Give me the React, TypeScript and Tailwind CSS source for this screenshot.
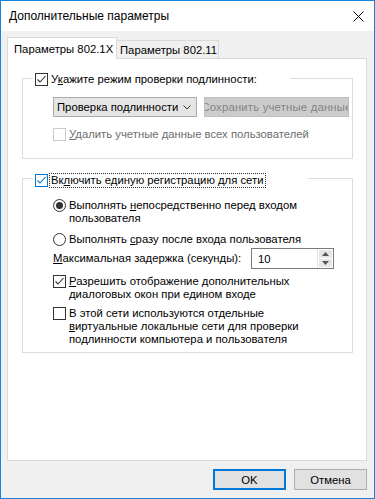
import React from "react";

const FONT = { fontFamily: '"Liberation Sans", Arial, sans-serif' };

function CheckBox({ checked, variant = "normal" }: { checked?: boolean; variant?: "normal" | "focus" | "disabled" }) {
  const border =
    variant === "focus" ? "border-[#0078d7]" : variant === "disabled" ? "border-[#cccccc]" : "border-[#333333]";
  const stroke = variant === "focus" ? "#0078d7" : "#333333";
  return (
    <div className={`w-[13px] h-[13px] border ${border} bg-white flex items-center justify-center shrink-0`}>
      {checked && (
        <svg width="11" height="11" viewBox="0 0 11 11">
          <path d="M1.5 5.5 L4 8 L9.5 2" fill="none" stroke={stroke} strokeWidth="1.1" />
        </svg>
      )}
    </div>
  );
}

function Radio({ checked }: { checked?: boolean }) {
  return (
    <div className="w-[13px] h-[13px] rounded-full border border-[#333333] bg-white flex items-center justify-center shrink-0">
      {checked && <div className="w-[7px] h-[7px] rounded-full bg-[#333333]" />}
    </div>
  );
}

export default function App() {
  return (
    <div
      className="w-[375px] h-[499px] border border-[#1883d7] flex flex-col bg-[#f0f0f0] text-[11.3px] text-black overflow-hidden"
      style={FONT}
    >
      {/* Title bar */}
      <div className="h-[30px] bg-white flex items-center justify-between pl-[8px] pr-[10px] shrink-0">
        <span className="text-[12px] leading-[14px] whitespace-nowrap">Дополнительные параметры</span>
        <svg width="11" height="11" viewBox="0 0 11 11">
          <path d="M0.5 0.5 L10.5 10.5 M10.5 0.5 L0.5 10.5" stroke="#000" strokeWidth="1" />
        </svg>
      </div>

      <div className="flex-1 flex flex-col pt-[6px] pl-[6px] pr-[7px]">
        {/* Tabs */}
        <div className="h-[21px] flex items-start">
          <div className="relative z-10 h-[22px] w-[110px] border-l border-t border-r border-[#d9d9d9] bg-white pl-[6px] flex items-center">
            <span className="leading-[14px] whitespace-nowrap">Параметры 802.1X</span>
          </div>
          <div className="mt-[3px] h-[18px] w-[102px] border-t border-r border-[#d9d9d9] bg-[#f0f0f0] pl-[3px] flex items-center">
            <span className="leading-[14px] whitespace-nowrap">Параметры 802.11</span>
          </div>
        </div>

        {/* Panel */}
        <div className="h-[403px] border border-[#d9d9d9] bg-white flex flex-col">
          {/* Group 1 */}
          <div className="relative mt-[19px] ml-[14px] w-[331px] border border-[#dcdcdc] pl-[30px] pt-[18px] pb-[17px]">
            <div className="absolute -top-[7px] left-[10px] w-[257px] h-[14px] bg-white flex items-center pl-[2px]">
              <CheckBox checked />
              <span className="ml-[3px] leading-[14px] whitespace-nowrap">
                У<span className="underline">к</span>ажите режим проверки подлинности:
              </span>
            </div>
            <div className="flex items-center">
              <div className="w-[144px] h-[20px] bg-[#e5e5e5] border border-[#acacac] flex items-center justify-between pl-[3px] pr-[5px]">
                <span className="leading-[14px] whitespace-nowrap">Проверка подлинности</span>
                <svg width="8" height="5" viewBox="0 0 8 5">
                  <path d="M0.5 0.5 L4 4 L7.5 0.5" fill="none" stroke="#333" strokeWidth="1" />
                </svg>
              </div>
              <div className="ml-[7px] w-[145px] h-[20px] bg-[#cccccc] border border-[#bfbfbf] flex items-center justify-center overflow-hidden">
                <span className="leading-[14px] whitespace-nowrap text-[#838383] tracking-[0.2px]">Сохранить учетные данные</span>
              </div>
            </div>
            <div className="mt-[10px] h-[14px] flex items-center">
              <CheckBox variant="disabled" />
              <span className="ml-[3px] leading-[14px] text-[#6d6d6d] whitespace-nowrap">
                <span className="underline">У</span>далить учетные данные всех пользователей
              </span>
            </div>
          </div>

          {/* Group 2 */}
          <div className="relative mt-[19px] ml-[14px] w-[331px] border border-[#dcdcdc] pl-[30px] pt-[20px] pb-[6px]">
            <div className="absolute -top-[6px] left-[10px] w-[275px] h-[15px] bg-white flex items-center pl-[2px]">
              <CheckBox checked variant="focus" />
              <span className="ml-[1px] px-[1px] leading-[13px] border border-dotted border-[#333] whitespace-nowrap">
                Вк<span className="underline">л</span>ючить единую регистрацию для сети
              </span>
            </div>

            <div className="flex items-start">
              <div className="h-[13px] flex items-center">
                <Radio checked />
              </div>
              <div className="ml-[3px] leading-[13px]">
                Выполнять <span className="underline">н</span>епосредственно перед входом
                <br />
                пользователя
              </div>
            </div>

            <div className="mt-[8px] flex items-start">
              <div className="h-[13px] flex items-center">
                <Radio />
              </div>
              <div className="ml-[3px] leading-[13px] whitespace-nowrap">
                Выполнять <span className="underline">с</span>разу после входа пользователя
              </div>
            </div>

            <div className="mt-[2px] flex items-center">
              <div className="w-[198px] leading-[13px] whitespace-nowrap">
                <span className="underline">М</span>аксимальная задержка (секунды):
              </div>
              <div className="w-[83px] h-[21px] border border-[#7a7a7a] bg-white flex items-stretch">
                <div className="flex-1 flex items-center pl-[6px] leading-[14px]">10</div>
                <div className="w-[16px] flex flex-col border-l border-[#e3e3e3] p-[1px] gap-[1px]">
                  <div className="flex-1 bg-[#e6e6e6] flex items-center justify-center">
                    <svg width="7" height="4" viewBox="0 0 7 4">
                      <path d="M0 4 L3.5 0 L7 4 Z" fill="#555" />
                    </svg>
                  </div>
                  <div className="flex-1 bg-[#e6e6e6] flex items-center justify-center">
                    <svg width="7" height="4" viewBox="0 0 7 4">
                      <path d="M0 0 L3.5 4 L7 0 Z" fill="#555" />
                    </svg>
                  </div>
                </div>
              </div>
            </div>

            <div className="mt-[6px] flex items-start">
              <div className="h-[13px] flex items-center">
                <CheckBox checked />
              </div>
              <div className="ml-[3px] leading-[13px]">
                <span className="underline">Р</span>азрешить отображение дополнительных
                <br />
                диалоговых окон при едином входе
              </div>
            </div>

            <div className="mt-[6px] flex items-start">
              <div className="h-[13px] flex items-center">
                <CheckBox />
              </div>
              <div className="ml-[3px] leading-[13px]">
                В этой сети используются отдельные
                <br />
                <span className="underline">в</span>иртуальные локальные сети для проверки
                <br />
                подлинности компьютера и пользователя
              </div>
            </div>
          </div>
        </div>

        {/* Buttons */}
        <div className="mt-[8px] flex justify-end gap-[8px]">
          <div className="w-[73px] h-[21px] border-2 border-[#0078d7] bg-[#e1e1e1] flex items-center justify-center leading-[14px]">
            OK
          </div>
          <div className="w-[73px] h-[21px] border border-[#adadad] bg-[#e1e1e1] flex items-center justify-center leading-[14px]">
            Отмена
          </div>
        </div>
      </div>
    </div>
  );
}
